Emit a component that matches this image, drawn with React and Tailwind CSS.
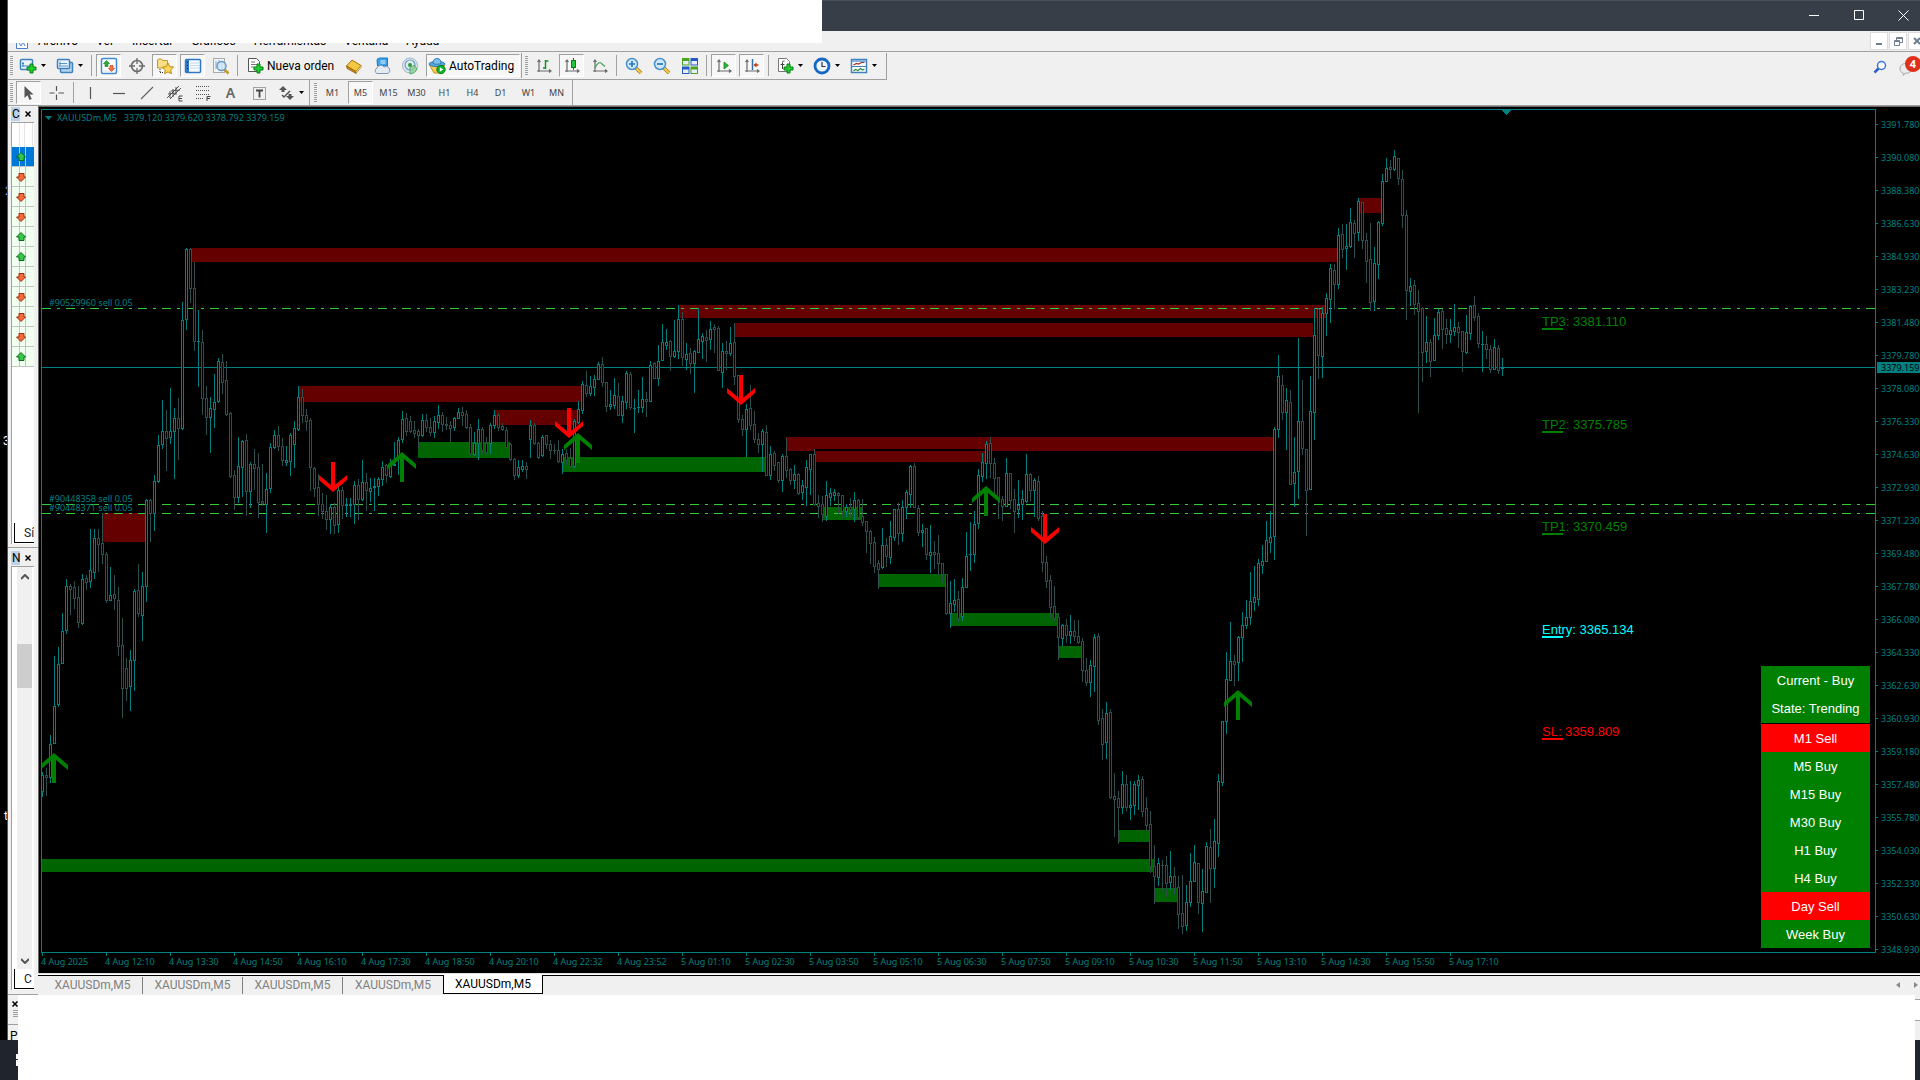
const CANDLES = `
u772 775 791 796;d768 775 777 795;u735 744 777 782;u656 706 743 743;u647 664 704 706;u613 631 663 663;u579 586 630 633;d584 586 589 614;
d581 587 598 608;d586 597 622 627;u574 579 623 624;d575 578 582 589;u529 570 581 587;u529 538 572 578;d529 538 544 571;d513 543 554 563;
d552 554 600 602;u567 595 600 600;d575 594 598 609;d587 600 646 655;d618 645 688 717;d658 668 688 700;u650 660 686 710;u589 591 660 690;
d564 590 613 616;u572 586 615 640;u499 500 586 601;d499 500 513 541;u475 481 513 530;u435 445 481 482;u400 431 444 448;d410 431 438 470;
u388 431 437 443;u408 418 431 478;d398 418 428 459;u302 320 428 429;u248 249 319 329;d248 249 288 302;d262 288 341 350;u310 341 341 386;
d330 342 398 414;d386 398 417 434;u397 408 417 452;u374 402 409 427;u358 361 401 402;d354 362 382 393;d361 380 414 415;d412 413 476 477;
d470 475 497 509;u437 466 497 502;u440 441 467 496;d434 440 491 515;u462 464 491 507;d449 464 468 489;d453 467 502 517;d464 501 503 505;
u473 489 504 532;u443 447 488 492;u430 435 447 448;d426 435 446 450;d438 446 460 465;u446 460 462 465;u433 435 461 475;u421 428 444 467;
u386 397 429 430;d389 397 415 422;d409 415 421 430;d418 420 467 490;d467 468 488 496;d474 487 504 515;d493 504 511 518;d495 511 519 529;
u504 507 519 533;d503 507 525 533;u487 490 524 532;d487 490 505 518;u498 504 505 516;u498 504 505 516;u481 485 504 523;d479 485 499 519;
u460 482 499 500;d473 482 490 510;u478 488 491 501;u478 486 487 510;u477 479 486 495;u461 467 479 485;d464 465 475 482;u459 465 476 477;
u442 464 465 465;u437 440 458 474;u411 419 439 442;d413 418 431 435;d416 421 431 432;d421 430 433 437;d429 431 435 448;u414 420 435 436;
d414 420 427 431;d418 427 432 435;u416 421 432 437;u405 415 422 428;d412 415 424 431;d417 424 425 429;d421 425 428 441;u417 418 427 430;
u408 412 418 418;d407 412 415 425;d410 414 427 428;d424 427 453 454;u432 443 454 455;u419 429 443 459;d427 429 450 453;d437 443 452 453;
u423 425 443 453;u410 415 425 428;d413 415 427 430;d423 426 429 430;d427 430 447 447;d443 444 459 460;d458 459 475 479;u460 467 475 477;
u460 466 469 471;d462 466 469 478;u420 425 439 457;d423 425 443 444;d442 443 457 458;u435 437 455 456;d435 435 444 448;d440 444 450 458;
d444 450 450 453;d440 450 461 462;u449 454 462 473;d449 453 460 464;d448 458 466 466;u419 421 466 467;u401 409 422 423;u381 384 410 413;
d371 385 393 396;u376 386 393 395;u375 379 387 395;u362 364 379 379;d357 364 382 386;d382 382 406 411;u390 404 406 409;u378 395 405 408;
d383 396 415 415;u396 401 415 422;u371 373 402 408;d372 374 407 409;u399 408 408 432;u390 407 407 412;u377 399 407 412;d392 399 401 416;
u361 365 401 401;d362 363 378 378;u345 361 378 385;u324 342 360 360;u329 342 345 349;d340 341 356 370;u320 351 356 357;u305 319 351 358;
d312 319 357 365;u343 354 359 369;d348 353 363 373;u350 351 363 392;u308 339 352 352;u333 336 341 358;d330 337 340 361;u321 329 339 349;
d324 327 329 352;d326 328 370 370;u343 351 372 387;d341 351 353 369;u327 343 353 355;d323 342 376 384;d375 375 419 422;d415 419 429 435;
u404 409 429 456;d385 408 425 429;d411 424 439 442;d433 439 444 452;u429 431 444 471;d425 432 475 475;u446 454 475 479;d451 453 465 470;
d462 462 480 482;u454 456 480 491;d438 456 470 477;d468 469 480 484;u465 474 480 488;d473 474 493 494;u480 485 492 499;u460 467 487 505;
u454 454 469 494;d449 454 504 505;d495 503 506 517;d496 504 514 521;u481 495 516 520;u488 493 497 505;u489 492 495 500;d492 493 495 513;
d495 495 511 517;u504 507 511 516;d498 507 509 517;u492 500 509 521;d499 500 517 519;d499 516 522 525;d521 521 531 552;d530 531 543 563;
d537 542 566 572;d560 563 569 588;u528 545 567 568;d538 545 556 566;u521 536 557 563;u509 509 537 540;d503 509 533 544;u500 507 533 541;
u490 492 507 518;u465 466 494 507;d463 466 507 507;d505 508 532 535;u524 530 532 546;d528 528 554 559;u525 552 555 572;d541 552 554 568;
d535 553 563 574;d563 563 574 582;d574 574 613 614;u581 603 613 627;u579 600 604 611;d591 599 618 621;u578 587 616 620;u532 556 587 587;
u522 554 554 570;u511 524 554 562;u469 475 523 528;u453 462 476 481;u441 444 463 478;d437 443 463 477;d458 463 478 495;d477 477 497 518;
d496 499 506 520;u458 473 506 506;d473 473 500 508;d489 499 511 532;u480 505 509 517;u490 499 504 519;u454 474 501 502;d473 474 490 500;
u478 480 490 516;d476 481 518 520;d511 516 562 571;d556 562 581 587;d575 580 607 617;d586 606 618 620;d613 617 637 659;u624 625 638 645;
d619 625 635 642;u615 631 635 643;d620 631 636 640;d620 636 642 643;d638 641 670 681;d658 670 682 685;u660 665 682 696;u634 637 666 691;
d633 636 720 724;d709 718 744 759;u702 713 742 758;d709 712 797 798;d773 796 799 836;d791 798 807 843;u771 784 807 813;d775 784 807 810;
u781 805 807 819;u781 784 805 814;u775 780 785 809;d776 779 811 816;d797 808 825 830;d811 824 866 872;d845 866 876 903;u858 863 877 885;
d860 865 865 891;d856 865 883 896;u851 876 882 889;d867 876 888 894;d876 887 914 928;d875 913 926 933;u885 902 925 930;u853 881 902 906;
u845 862 881 881;d863 863 902 913;u869 891 903 931;u842 846 892 892;d829 847 868 902;u819 841 868 887;u774 781 843 856;u721 721 782 785;
u652 679 721 733;u622 661 680 680;d655 661 664 685;u636 637 662 680;u612 625 637 661;u600 617 625 628;u572 601 617 624;u566 597 602 610;
u559 563 599 605;u545 561 565 573;u521 540 561 561;u511 537 542 552;u427 429 536 559;u355 376 429 437;d375 385 412 419;u388 400 412 449;
d390 402 484 484;u437 472 483 506;u338 421 471 498;d380 421 448 454;d449 449 490 535;u376 411 489 489;u308 335 412 439;d308 309 355 378;
u307 313 356 377;u293 298 313 335;u264 268 299 322;d264 270 284 308;u228 235 284 288;d224 234 249 257;u224 246 248 269;u208 222 246 247;
d220 223 233 257;u198 201 232 240;d202 202 240 248;d233 240 261 282;d223 259 302 310;u247 263 301 310;u221 222 264 278;u174 181 223 225;
u158 168 181 181;d160 167 169 178;u150 156 169 170;d158 158 178 184;d170 179 215 227;d210 215 290 319;u278 286 291 305;d280 285 304 314;
d290 303 311 412;d307 308 352 381;u316 342 351 362;d339 342 361 376;u318 335 360 360;u309 312 335 339;d309 311 329 348;d319 328 334 343;
u319 330 334 342;u304 327 331 335;d322 327 332 347;d331 331 351 371;u315 332 352 353;u305 306 333 339;d296 305 317 320;d313 316 343 347;
u331 344 344 371;d336 344 349 358;d345 349 369 372;u339 347 369 369;d345 348 370 373;u358 368 368 375`
  .trim()
  .split(";")
  .map((s) => {
    const t = s.trim();
    const [high, top, bottom, low] = t.slice(1).split(" ").map(Number);
    return { up: t[0] === "u", high, top, bottom, low };
  });

// x1, y1, x2, y2
const SUPPLY = [
  [190, 248, 1337, 262],
  [298, 386, 581, 402],
  [494, 410, 578, 425],
  [102, 513, 146, 542],
  [678, 305, 1326, 318],
  [734, 323, 1313, 337],
  [786, 437, 1274, 451],
  [814, 451, 986, 462],
  [1358, 198, 1381, 213],
];

const DEMAND = [
  [418, 442, 510, 458],
  [562, 457, 766, 472],
  [822, 507, 862, 520],
  [878, 574, 946, 587],
  [950, 613, 1058, 626],
  [1058, 646, 1082, 658],
  [1118, 830, 1150, 842],
  [41, 859, 1154, 872],
  [1154, 888, 1178, 902],
];

const BUY_ARROWS = [[54, 753], [402, 452], [578, 433], [986, 486], [1238, 690]];
const SELL_ARROWS = [[333, 492], [569, 438], [741, 405], [1045, 544]];

const PRICES = [
  "3391.780", "3390.080", "3388.380", "3386.630", "3384.930", "3383.230", "3381.480",
  "3379.780", "3378.080", "3376.330", "3374.630", "3372.930", "3371.230", "3369.480",
  "3367.780", "3366.080", "3364.330", "3362.630", "3360.930", "3359.180", "3357.480",
  "3355.780", "3354.030", "3352.330", "3350.630", "3348.930",
];

const TIMES = [
  "4 Aug 2025", "4 Aug 12:10", "4 Aug 13:30", "4 Aug 14:50", "4 Aug 16:10", "4 Aug 17:30",
  "4 Aug 18:50", "4 Aug 20:10", "4 Aug 22:32", "4 Aug 23:52", "5 Aug 01:10", "5 Aug 02:30",
  "5 Aug 03:50", "5 Aug 05:10", "5 Aug 06:30", "5 Aug 07:50", "5 Aug 09:10", "5 Aug 10:30",
  "5 Aug 11:50", "5 Aug 13:10", "5 Aug 14:30", "5 Aug 15:50", "5 Aug 17:10",
];

const SIGNALS = [
  ["M1 Sell", false],
  ["M5 Buy", true],
  ["M15 Buy", true],
  ["M30 Buy", true],
  ["H1 Buy", true],
  ["H4 Buy", true],
  ["Day Sell", false],
  ["Week Buy", true],
];

const WATCH = ["up", "down", "down", "down", "up", "up", "down", "down", "down", "down", "up"];

function Icon({ children, size = 18 }) {
  return (
    <svg width={size} height={size} viewBox="0 0 18 18" fill="none" className="shrink-0">
      {children}
    </svg>
  );
}

const Plus = () => (
  <path d="M11 7h3v3h3v3h-3v3h-3v-3H8v-3h3z" fill="#1fd02f" stroke="#0a7d14" />
);

const Axes = () => (
  <path d="M4 3v12M2 14h14M2.500 5L4 3l1.500 2M14 12.500l2 1.500-2 1.500" stroke="#6b6b6b" strokeWidth="1.200" />
);

const Lens = () => (
  <>
    <path d="M11 11l5 5" stroke="#a87a10" strokeWidth="3.500" />
    <path d="M11 11l5 5" stroke="#f2cf55" strokeWidth="2" />
    <circle cx="7" cy="7" r="5.500" fill="#cfe8fb" stroke="#4a90c8" strokeWidth="1.500" />
  </>
);

const icons = {
  newChart: (
    <Icon>
      <rect x="1.500" y="2.500" width="12" height="10" rx="1" fill="#e9f3fc" stroke="#3f80bd" strokeWidth="1.500" />
      <path d="M4 5v5M3 6.500h2M3 9h9" stroke="#3f80bd" />
      <Plus />
    </Icon>
  ),
  profiles: (
    <Icon>
      <rect x="4.500" y="5.500" width="12" height="10" rx="1" fill="#b5d3ef" stroke="#3f80bd" strokeWidth="1.500" />
      <rect x="1.500" y="2.500" width="12" height="9" rx="1" fill="#e9f3fc" stroke="#3f80bd" strokeWidth="1.500" />
      <path d="M4 4.500v5M3 6.500h8M3 9h9" stroke="#5c93c6" />
    </Icon>
  ),
  watch: (
    <Icon>
      <rect x="1.500" y="1.500" width="15" height="15" rx="1.500" fill="#fff" stroke="#3f8ad0" strokeWidth="1.500" />
      <path d="M3 14h12" stroke="#ddd" />
      <path d="M6.500 3.500l3 3H8v3H5v-3H3.500z" fill="#25b336" stroke="#0d7a1b" strokeWidth=".6" />
      <path d="M11.500 14.500l-3-3H10v-3h3v3h1.500z" fill="#ff7043" stroke="#b3380f" strokeWidth=".6" />
    </Icon>
  ),
  target: (
    <Icon>
      <circle cx="9" cy="9" r="5.500" stroke="#6b6b6b" strokeWidth="1.600" />
      <path d="M9 1v6M9 11v6M1 9h6M11 9h6" stroke="#6b6b6b" strokeWidth="1.300" />
    </Icon>
  ),
  favorites: (
    <Icon>
      <path d="M1.500 3V11h10V3.500h-5L5.500 2h-3z" fill="#f8df85" stroke="#c19a2c" />
      <path d="M4 12v4M4 15.500h3" stroke="#333" strokeDasharray="1 1" />
      <path d="M12 6l1.700 3.600 3.800.5-2.800 2.700.7 3.900L12 14.800l-3.400 1.900.7-3.900L6.500 10.100l3.800-.5z" fill="#ffd75a" stroke="#b98a14" />
    </Icon>
  ),
  terminal: (
    <Icon>
      <rect x="1.500" y="2.500" width="15" height="13" rx="1" fill="#f7fbff" stroke="#2f79c2" strokeWidth="1.500" />
      <path d="M2 3h3v12H2z" fill="#2f79c2" />
      <path d="M6 6h9M6 8.500h9M6 11h9" stroke="#c7d8ea" />
      <path d="M3.500 5v1M3.500 8v1M3.500 11v1" stroke="#111" />
    </Icon>
  ),
  tester: (
    <Icon>
      <rect x="1.500" y="1.500" width="11" height="14" fill="#f3f3f3" stroke="#aaa" />
      <path d="M4 4v8M7 3v8M10 5v8" stroke="#7fa8d0" />
      <path d="M12.500 12.500l4 4" stroke="#c99a20" strokeWidth="2.500" />
      <circle cx="9.500" cy="9" r="4.500" fill="#cfe6fa" fillOpacity=".8" stroke="#5a94c8" strokeWidth="1.300" />
    </Icon>
  ),
  order: (
    <Icon>
      <path d="M2.500 1.500h8l3 3v10h-11z" fill="#fff" stroke="#555" />
      <path d="M5 5h4M5 7.500h6M5 10h3" stroke="#777" />
      <Plus />
    </Icon>
  ),
  book: (
    <Icon>
      <path d="M1.500 9L7 3l9 5.500-5 6z" fill="#f5c842" stroke="#a87512" />
      <path d="M1.500 9l9.500 5.500v2L2 11.500z" fill="#c98a17" stroke="#8f5f0b" strokeWidth=".7" />
      <path d="M16 8.500v2L11 16.500v-2z" fill="#fff3c4" stroke="#a87512" strokeWidth=".7" />
    </Icon>
  ),
  server: (
    <Icon>
      <path d="M4 2.500L6.500 1h8v8h-10z" fill="#39a0ea" stroke="#1b78bf" />
      <path d="M7.500 4h5M7.500 6h5" stroke="#e8f6ff" strokeWidth="1.200" />
      <path d="M4 16.500a3 3 0 010-5.500 4 4 0 017-1 3.400 3.400 0 014 6.500z" fill="#e3ebf5" stroke="#8796b0" />
    </Icon>
  ),
  signal: (
    <Icon>
      <circle cx="9" cy="8.500" r="7.500" fill="#dde9ef" stroke="#9db4c2" />
      <circle cx="9" cy="8" r="5" stroke="#6f9fc0" strokeWidth="1.200" />
      <circle cx="9" cy="8" r="2" fill="#2f9c3e" />
      <path d="M9 10v7a8 8 0 007-5l-3-4a5 5 0 01-4 2z" fill="#8fd09a" fillOpacity=".8" stroke="#48a156" strokeWidth=".8" />
    </Icon>
  ),
  auto: (
    <Icon>
      <path d="M1.500 8h15L13 16H6z" fill="#f6cf50" stroke="#c4951b" />
      <ellipse cx="9" cy="7" rx="8" ry="2.600" fill="#5aa9df" stroke="#2d7cb5" />
      <path d="M5 6.500C5 3 6.500 1.500 9 1.500S13 3 13 6.500c-2 1-6 1-8 0z" fill="#7fc1ec" stroke="#2d7cb5" />
      <circle cx="13" cy="12.500" r="4.200" fill="#12b22a" stroke="#0b7d1b" />
      <path d="M11.800 10.300v4.400l3.400-2.200z" fill="#fff" />
    </Icon>
  ),
  bars: (
    <Icon>
      <Axes />
      <path d="M10.500 3v9M10.500 4h3M8 11h2.500" stroke="#1a8f2b" strokeWidth="1.500" />
    </Icon>
  ),
  candles: (
    <Icon>
      <Axes />
      <path d="M10.500 1v12" stroke="#0d7a1b" />
      <rect x="8.500" y="3.500" width="4" height="7" fill="#25c43a" stroke="#0d7a1b" />
    </Icon>
  ),
  line: (
    <Icon>
      <Axes />
      <path d="M4 11c2-5 5-7 7-4l3 2.500" stroke="#4ba35a" strokeWidth="1.300" />
    </Icon>
  ),
  zoomIn: (
    <Icon>
      <Lens />
      <path d="M7 4v6M4 7h6" stroke="#2a78b8" strokeWidth="1.700" />
    </Icon>
  ),
  zoomOut: (
    <Icon>
      <Lens />
      <path d="M4 7h6" stroke="#2a78b8" strokeWidth="1.700" />
    </Icon>
  ),
  tile: (
    <Icon>
      <rect x="1" y="1" width="7.500" height="7.500" fill="#4ba321" />
      <rect x="9.500" y="1" width="7.500" height="7.500" fill="#2458c7" />
      <rect x="1" y="9.500" width="7.500" height="7.500" fill="#2458c7" />
      <rect x="9.500" y="9.500" width="7.500" height="7.500" fill="#4ba321" />
      <path d="M2 4h5.500v3.500H2zM10.500 4H16v3.500h-5.500zM2 12.500h5.500V16H2zM10.500 12.500H16V16h-5.500z" fill="#e8f0fb" />
    </Icon>
  ),
  autoScroll: (
    <Icon>
      <Axes />
      <path d="M9 5v7l4.500-3.500z" fill="#2bb53c" stroke="#0d7a1b" strokeWidth=".7" />
    </Icon>
  ),
  shift: (
    <Icon>
      <Axes />
      <path d="M9.500 2v11" stroke="#2f6fa8" strokeWidth="1.500" />
      <path d="M15.500 8h-4" stroke="#c23a10" strokeWidth="1.500" />
      <path d="M13.500 5.500v5L10.500 8z" fill="#c23a10" />
    </Icon>
  ),
  indicators: (
    <Icon>
      <path d="M2.500 1.500h8l3 3v10h-11z" fill="#fff" stroke="#777" />
      <path d="M8.500 4C6.500 3.500 6.500 5 6.500 7v5M4.500 7.500h4" stroke="#444" />
      <Plus />
    </Icon>
  ),
  clock: (
    <Icon>
      <circle cx="9" cy="9" r="7" fill="#eef5fc" stroke="#1668c4" strokeWidth="2.800" />
      <path d="M9 5v4.500h3.500" stroke="#333" strokeWidth="1.200" />
    </Icon>
  ),
  template: (
    <Icon>
      <rect x="1.500" y="2.500" width="15" height="13" fill="#fff" stroke="#3f80bd" strokeWidth="1.500" />
      <path d="M2 3h14v2H2z" fill="#7fb2e0" />
      <path d="M2 9.500h14" stroke="#3f80bd" />
      <path d="M3.500 8l3-1.500 2 .5 3-1.500h3" stroke="#a03018" strokeWidth="1.200" />
      <path d="M3.500 14l2-1.500 2.500 1 2.500-2 2 1.500 2-1" stroke="#2a8f3c" strokeWidth="1.200" />
    </Icon>
  ),
  cursor: (
    <Icon>
      <path d="M4.500 2v12l3-2.700 2 4.700 2.200-1-2-4.500H13.500z" fill="#555" />
    </Icon>
  ),
  cross: (
    <Icon>
      <path d="M8.500 2v5M8.500 10.500V16M1.500 9h5M10.500 9h5.500" stroke="#555" strokeWidth="1.200" />
    </Icon>
  ),
  vline: (
    <Icon>
      <path d="M8.500 3v12" stroke="#555" strokeWidth="1.200" />
    </Icon>
  ),
  hline: (
    <Icon>
      <path d="M3 9.500h12" stroke="#555" strokeWidth="1.200" />
    </Icon>
  ),
  trend: (
    <Icon>
      <path d="M3 15L15 3" stroke="#666" strokeWidth="1.200" />
    </Icon>
  ),
  channel: (
    <Icon>
      <path d="M1 14L13 2M4 15L15 4M4 7v7M7 5v8M10 3v8M2 10l8-1M5 7l9-1" stroke="#555" />
      <path d="M16.500 12H13v5h3.500M13 14.500h3" stroke="#444" />
    </Icon>
  ),
  fibo: (
    <Icon>
      <path d="M2 2.500h14M2 6.500h14M2 10.500h14M2 14.500h8" stroke="#555" strokeDasharray="1 1" />
      <path d="M16.500 12.500H13V17M13 14.500h3" stroke="#444" />
    </Icon>
  ),
  label: (
    <Icon>
      <rect x="3.500" y="3.500" width="12" height="12" stroke="#555" strokeDasharray="1 1" />
      <path d="M6 6.500h7M9.500 6.500v7" stroke="#444" strokeWidth="1.800" />
    </Icon>
  ),
  arrows: (
    <Icon>
      <path d="M6 2l4 4H7.500v2h-3V6H2zM13 16l-4-4h2.500v-2h3v2H17z" fill="#555" />
      <path d="M5 11l2 2 6-6" stroke="#555" strokeWidth="1.500" />
    </Icon>
  ),
};

function Grip() {
  return (
    <div className="ml-0.5 mr-px flex h-[19px] w-[3px] flex-col justify-between">
      {Array.from({ length: 10 }, (_, i) => (
        <span key={i} className="h-px bg-[#a0a0a0]" />
      ))}
    </div>
  );
}

function Sep() {
  return (
    <div className="flex w-[6px] justify-center">
      <span className="h-[21px] w-px bg-[#a0a0a0]" />
    </div>
  );
}

function Tool({ label, pressed, children }) {
  return (
    <button
      aria-label={label}
      className={
        "ml-0.5 mr-px flex h-[23px] w-[25px] items-center justify-center border text-[9px] text-[#444] " +
        (pressed ? "border-r-white border-b-white border-t-[#a0a0a0] border-l-[#a0a0a0] bg-[#f7f7f7]" : "border-transparent")
      }
    >
      {children}
    </button>
  );
}

function DropTool({ label, children }) {
  return (
    <button aria-label={label} className="flex h-[23px] w-[37px] items-center gap-1 pl-[5px]">
      {children}
      <svg width="5" height="3" viewBox="0 0 5 3">
        <path d="M0 0h5L2.500 3z" />
      </svg>
    </button>
  );
}

function TitleBar() {
  return (
    <header className="flex h-[31px] items-stretch justify-end border-t border-[#48505a] bg-[#383e48] pb-0.5">
      <button aria-label="Minimizar" className="flex w-[45px] items-center justify-center">
        <svg width="10" height="10" stroke="#fff"><path d="M0 5.500h10" /></svg>
      </button>
      <button aria-label="Maximizar" className="flex w-[45px] items-center justify-center">
        <svg width="10" height="10" stroke="#fff" fill="none"><path d="M.5.500h9v9h-9z" /></svg>
      </button>
      <button aria-label="Cerrar" className="-mr-[6px] flex w-[45px] items-center justify-center">
        <svg width="11" height="11" stroke="#fff"><path d="M.5.500l10 10M10.500.5l-10 10" /></svg>
      </button>
    </header>
  );
}

function MenuBar() {
  const box = "flex h-[18px] w-[18px] shrink-0 items-center justify-center border border-[#dcdcdc] bg-white";
  return (
    <div className="flex h-5 items-center overflow-hidden">
      <nav className="flex flex-1 items-center gap-[18px] pl-2 text-[12px] leading-[20px] text-black">
        <svg width="12" height="14" viewBox="0 0 12 14" fill="none" className="-mr-2 mt-0.5">
          <path d="M.5.500h11v13H.5z" fill="#fff" stroke="#4a7fd0" />
          <path d="M3 8l2 3 2-4 2 4" stroke="#4a7fd0" />
        </svg>
        {["Archivo", "Ver", "Insertar", "Gráficos", "Herramientas", "Ventana", "Ayuda"].map((m) => (
          <button key={m}>{m}</button>
        ))}
      </nav>
      <div className="-mr-[6px] flex gap-px">
        <button aria-label="Minimizar ventana" className={box}>
          <svg width="6" height="8"><path d="M0 7h6" stroke="#6f7f8f" strokeWidth="2" /></svg>
        </button>
        <button aria-label="Restaurar ventana" className={box}>
          <svg width="9" height="9" fill="none" stroke="#6f7f8f"><path d="M2.500 3V.5h6v5H6M.5 3.500h5v5h-5zM.5 4.500h5M3 1.500h5" /></svg>
        </button>
        <button aria-label="Cerrar ventana" className={box}>
          <svg width="8" height="8" stroke="#6f7f8f" strokeWidth="2"><path d="M1 1l6 6M7 1L1 7" /></svg>
        </button>
      </div>
    </div>
  );
}

function Toolbars() {
  return (
    <div className="flex items-start border-t border-[#a0a0a0] pt-px">
      <div className="flex flex-1 flex-col items-start">
        <div className="flex h-[27px] items-center border-r border-b border-[#a0a0a0] pr-1 pb-px">
          <Grip />
          <DropTool label="Nuevo gráfico">{icons.newChart}</DropTool>
          <DropTool label="Perfiles">{icons.profiles}</DropTool>
          <Sep />
          <Tool label="Observación de mercado" pressed>{icons.watch}</Tool>
          <Tool label="Ventana de datos">{icons.target}</Tool>
          <Tool label="Navegador" pressed>{icons.favorites}</Tool>
          <Tool label="Terminal" pressed>{icons.terminal}</Tool>
          <Tool label="Probador">{icons.tester}</Tool>
          <Sep />
          <button className="flex h-[23px] w-[99px] items-center gap-[3px] pl-[6px] text-[12px] text-black">
            {icons.order}Nueva orden
          </button>
          <Tool label="MetaEditor">{icons.book}</Tool>
          <Tool label="VPS">{icons.server}</Tool>
          <Tool label="Señales">{icons.signal}</Tool>
          <button className="ml-[3px] mr-px flex h-[23px] w-[94px] items-center gap-[3px] border border-t-[#a0a0a0] border-l-[#a0a0a0] border-r-white border-b-white bg-[#f7f7f7] pl-px text-[12px] text-black">
            {icons.auto}AutoTrading
          </button>
          <span className="mr-px h-[25px] w-px bg-[#a0a0a0]" />
          <Grip />
          <Tool label="Barras">{icons.bars}</Tool>
          <Tool label="Velas" pressed>{icons.candles}</Tool>
          <Tool label="Línea">{icons.line}</Tool>
          <Sep />
          <Tool label="Acercar">{icons.zoomIn}</Tool>
          <Tool label="Alejar">{icons.zoomOut}</Tool>
          <Tool label="Mosaico">{icons.tile}</Tool>
          <Sep />
          <Tool label="Desplazamiento automático" pressed>{icons.autoScroll}</Tool>
          <Tool label="Desplazar gráfico" pressed>{icons.shift}</Tool>
          <Sep />
          <DropTool label="Indicadores">{icons.indicators}</DropTool>
          <DropTool label="Períodos">{icons.clock}</DropTool>
          <DropTool label="Plantillas">{icons.template}</DropTool>
        </div>
        <div className="flex h-[25px] items-center border-r border-[#a0a0a0] pr-0.5 font-['Noto_Sans',sans-serif]">
          <Grip />
          <Tool label="Cursor" pressed>{icons.cursor}</Tool>
          <Tool label="Cruz">{icons.cross}</Tool>
          <Sep />
          <Tool label="Línea vertical">{icons.vline}</Tool>
          <Tool label="Línea horizontal">{icons.hline}</Tool>
          <Tool label="Línea de tendencia">{icons.trend}</Tool>
          <Tool label="Canal">{icons.channel}</Tool>
          <Tool label="Fibonacci">{icons.fibo}</Tool>
          <Tool label="Texto"><span className="text-[14px] font-semibold text-[#666]">A</span></Tool>
          <Tool label="Etiqueta">{icons.label}</Tool>
          <DropTool label="Flechas">{icons.arrows}</DropTool>
          <span className="mr-0.5 h-[25px] w-px bg-[#a0a0a0]" />
          <Grip />
          {["M1", "M5", "M15", "M30", "H1", "H4", "D1", "W1", "MN"].map((tf) => (
            <Tool key={tf} label={tf} pressed={tf === "M5"}>{tf}</Tool>
          ))}
        </div>
      </div>
      <div className="flex items-center gap-3 pt-1">
        <button aria-label="Buscar">
          <svg width="14" height="14" viewBox="0 0 14 14" fill="none">
            <path d="M1.500 12.500L6 8" stroke="#2a5fc8" strokeWidth="2.500" />
            <circle cx="8.500" cy="5.500" r="4" fill="#fff" stroke="#3d74dc" strokeWidth="1.500" />
          </svg>
        </button>
        <button aria-label="Notificaciones" className="relative h-5 w-[21px]">
          <svg width="16" height="16" viewBox="0 0 16 16" className="absolute bottom-0 left-0">
            <path d="M1 8a6 5 0 1111 2c-1 2-4 2.500-6 2l-1.500 2.500L4 12C2 11 1 10 1 8z" fill="#ececec" stroke="#aaa" />
          </svg>
          <span className="absolute -top-px -right-px flex h-4 w-4 items-center justify-center rounded-full bg-[#e0301c] font-['Open_Sans',sans-serif] text-[11px] font-bold text-white">4</span>
        </button>
      </div>
    </div>
  );
}

function DockHeader({ letter }) {
  return (
    <div className="flex h-4 items-center pl-[3px] text-[12px] leading-[14px]">
      <span className="w-[9px] overflow-hidden bg-[#bcd2e8] pl-px text-black">{letter}</span>
      <button aria-label="Cerrar panel" className="ml-[5px]">
        <svg width="6" height="6" stroke="#000" strokeWidth="1.500"><path d="M.5.500l5 5M5.500.5l-5 5" /></svg>
      </button>
    </div>
  );
}

function DockTab({ text }) {
  return (
    <div className="mr-1 ml-[3px] border-l border-[#a0a0a0] bg-white pb-px">
      <div className="ml-0.5 h-5 overflow-hidden border-b border-l border-black pl-[9px] text-[12px] leading-[20px] text-[#222]">
        {text}
      </div>
    </div>
  );
}

function Dock() {
  return (
    <aside className="flex w-[30px] shrink-0 flex-col bg-[#f0f0f0]">
      <DockHeader letter="C" />
      <div className="mr-1 ml-[3px] flex flex-1 flex-col border-t border-l border-[#a0a0a0] bg-white">
        <div className="flex h-6">
          <span className="w-2 border-r border-[#e5e5e5]" />
          <span className="w-[5px] border-r border-[#e5e5e5]" />
          <span className="w-[8px] border-r border-[#e5e5e5]" />
        </div>
        {WATCH.map((dir, i) => (
          <div
            key={i}
            className={"relative flex h-5 border-b border-[#c4c4c4] " + (i === 0 ? "bg-[#0078d7]" : "bg-[#f0fff0]")}
          >
            <span className="w-2 border-r border-[#c4c4c4]" />
            <span className="w-[6px] border-r border-[#c4c4c4]" />
            <svg width="10" height="10" viewBox="0 0 10 10" className="absolute top-[5px] left-[4px]">
              {dir === "up" ? (
                <path d="M5 .5L9.500 5H8v3.500H3V5H.5z" fill="#35c94a" stroke="#0b6d18" />
              ) : (
                <path d="M5 9.500L.5 5H3V1.500h5V5h1.500z" fill="#f5693a" stroke="#9c2f0a" />
              )}
            </svg>
          </div>
        ))}
      </div>
      <DockTab text="Sí" />
      <div className="h-[4px] border-b border-[#a0a0a0]" />
      <div className="h-0.5" />
      <DockHeader letter="N" />
      <div className="mr-1 ml-[3px] flex h-[403px] border-t border-l border-[#a0a0a0] bg-white pl-[5px]">
        <div className="flex w-[15px] flex-col items-center bg-[#f0f0f0]">
          <svg width="8" height="6" fill="none" stroke="#555" strokeWidth="2" className="mt-[7px]"><path d="M0 5l4-4 4 4" /></svg>
          <div className="mt-[64px] h-11 w-full bg-[#cdcdcd]" />
          <svg width="8" height="6" fill="none" stroke="#555" strokeWidth="2" className="mt-auto mb-[5px]"><path d="M0 1l4 4 4-4" /></svg>
        </div>
      </div>
      <DockTab text="C" />
      <div className="h-[5px] border-b border-[#a0a0a0]" />
    </aside>
  );
}

function Zone({ r, fill }) {
  return <rect x={r[0]} y={r[1]} width={r[2] - r[0]} height={r[3] - r[1]} fill={fill} />;
}

function Plot() {
  const arrow = "M0 0L14 12v5L2 7v23h-4V7l-12 10v-5z";
  return (
    <svg
      className="block h-full w-full"
      viewBox="42 110 1833 842"
      preserveAspectRatio="none"
      fill="none"
    >
      <g shapeRendering="crispEdges">
        {DEMAND.map((r, i) => <Zone key={i} r={r} fill="#006400" />)}
        {SUPPLY.map((r, i) => <Zone key={i} r={r} fill="#640000" />)}
        <rect x="814" y="449" width="172" height="2" fill="#000" />
        {[308, 504, 513].map((y) => (
          <path key={y} d={`M42 ${y + 0.5}H1875`} stroke="#32cd32" strokeDasharray="9 6 3 6" />
        ))}
        <path d="M42 367.500H1875" stroke="#008080" />
        {CANDLES.map((c, i) => {
          const x = 42.5 + i * 4;
          return (
            <g key={i} stroke={c.up ? "#008080" : "#2f4f4f"}>
              <path d={`M${x} ${c.high}V${c.low + 1}`} />
              {c.bottom > c.top ? (
                <rect x={x - 1} y={c.top + 0.5} width="2" height={c.bottom - c.top} fill="#000" />
              ) : (
                <path d={`M${x - 1.5} ${c.top + 0.5}h3`} />
              )}
            </g>
          );
        })}
        <path d="M1502 110h9l-4.500 5z" fill="#008080" />
      </g>
      {BUY_ARROWS.map(([x, y]) => (
        <path key={x} d={arrow} fill="#008000" transform={`translate(${x} ${y})`} />
      ))}
      {SELL_ARROWS.map(([x, y]) => (
        <path key={x} d={arrow} fill="#f00" transform={`translate(${x} ${y}) scale(1 -1)`} />
      ))}
    </svg>
  );
}

function Level({ className, bar, children }) {
  return (
    <div className={"absolute left-[1500px] font-['Liberation_Sans',Arial,sans-serif] text-[13px] leading-[16px] " + className}>
      {children}
      <span className={"absolute bottom-0 left-0 h-0.5 w-[21px] " + bar} />
    </div>
  );
}

function SignalPanel() {
  return (
    <div className="absolute right-[5px] bottom-[4px] w-[109px] text-center font-['Liberation_Sans',Arial,sans-serif] text-[13px] leading-[28px] text-white">
      <div className="mb-px bg-[#008000] pt-px">
        <p>Current - Buy</p>
        <p>State: Trending</p>
      </div>
      <ul className="leading-[26px]">
        {SIGNALS.map(([text, buy]) => (
          <li key={text} className={"pt-0.5 " + (buy ? "bg-[#008000]" : "bg-[#ff0000]")}>{text}</li>
        ))}
      </ul>
    </div>
  );
}

function Chart() {
  return (
    <div className="flex border-t border-l border-[#696969] bg-black pl-0.5 font-['Noto_Sans',sans-serif] text-[9px] leading-[11px] text-[#008080]">
      <div className="min-w-0 flex-1 pt-0.5">
        <div className="relative h-[844px] overflow-hidden border border-[#008080]">
          <Plot />
          <div className="absolute top-[2px] left-[3px] flex items-center gap-[5px] whitespace-pre">
            <svg width="7" height="4"><path d="M0 0h7L3.500 4z" fill="#008080" /></svg>
            {"XAUUSDm,M5   3379.120 3379.620 3378.792 3379.159"}
          </div>
          <span className="absolute top-[187px] left-[7px]">#90529960 sell 0.05</span>
          <span className="absolute top-[383px] left-[7px]">#90448358 sell 0.05</span>
          <span className="absolute top-[392px] left-[7px]">#90448371 sell 0.05</span>
          <Level className="top-[204px] text-[#008000]" bar="bg-[#008000]">TP3: 3381.110</Level>
          <Level className="top-[307px] text-[#008000]" bar="bg-[#008000]">TP2: 3375.785</Level>
          <Level className="top-[409px] text-[#008000]" bar="bg-[#008000]">TP1: 3370.459</Level>
          <Level className="top-[512px] text-[#00ffff]" bar="bg-[#00ffff]">Entry: 3365.134</Level>
          <Level className="top-[614px] text-[#ff0000]" bar="bg-[#ff0000]">SL: 3359.809</Level>
          <SignalPanel />
        </div>
        <div className="flex h-5 overflow-hidden">
          {TIMES.map((t) => (
            <div key={t} className="w-16 shrink-0 whitespace-nowrap">
              <div className="ml-px h-[3px] w-px bg-[#008080]" />
              {t}
            </div>
          ))}
        </div>
      </div>
      <div className="relative w-11 shrink-0 pt-px">
        {PRICES.map((p) => (
          <div key={p} className="flex h-[33px] items-center gap-[3px]">
            <span className="h-px w-0.5 bg-[#008080]" />
            {p}
          </div>
        ))}
        <div className="absolute top-[255px] right-0 left-px bg-[#008080] pl-1 text-black">3379.159</div>
      </div>
    </div>
  );
}

function ChartTabs() {
  return (
    <div className="flex h-5 items-start border-t border-black pl-[5px] text-[12px] leading-[17px]">
      {[0, 1, 2, 3].map((i) => (
        <button key={i} className={"mt-px h-[17px] w-[100px] border-[#808080] text-[#808080] " + (i < 3 ? "border-r" : "")}>
          XAUUSDm,M5
        </button>
      ))}
      <button className="-mt-px h-[19px] w-[100px] border-r border-b border-l border-black bg-white text-black">XAUUSDm,M5</button>
      <div className="ml-auto flex gap-[14px] pt-1.5 pr-0.5">
        <button aria-label="Anterior"><svg width="4" height="6" className="block"><path d="M4 0v6L0 3z" fill="#888" /></svg></button>
        <button aria-label="Siguiente"><svg width="4" height="6" className="block"><path d="M0 0v6l4-3z" fill="#888" /></svg></button>
      </div>
    </div>
  );
}

export default function App() {
  return (
    <div className="flex min-h-screen flex-col overflow-hidden bg-black font-[Roboto,'Noto_Sans',sans-serif]">
      <div className="flex">
        <div className="relative w-2 shrink-0 overflow-hidden border-r border-[#555] text-[12px] text-white">
          <span className="absolute top-[182px] left-[5px] text-[#6aa8e8]">2</span>
          <span className="absolute top-[432px] left-[3px]">3</span>
          <span className="absolute top-[807px] left-[4px]">t</span>
        </div>
        <main className="relative min-w-0 flex-1 bg-[#f0f0f0]">
          <TitleBar />
          <MenuBar />
          <div className="absolute top-0 left-0 h-[43px] w-[814px] bg-white" />
          <Toolbars />
          <div className="flex border-t border-[#a0a0a0]">
            <Dock />
            <div className="min-w-0 flex-1">
              <Chart />
              <div className="h-0.5 border-t border-[#e3e3e3] bg-white" />
              <ChartTabs />
            </div>
          </div>
        </main>
      </div>
      <footer className="flex flex-1">
        <div className="flex w-[18px] shrink-0 flex-col overflow-hidden">
          <div className="ml-[7px] h-[45px] border-l border-[#555] bg-[#f0f0f0] pl-[4px] text-[12px]">
            <svg width="6" height="6" stroke="#000" strokeWidth="1.500" className="mt-[6px]"><path d="M.5.500l5 5M5.500.5l-5 5" /></svg>
            <svg width="5" height="8" stroke="#a0a0a0" className="mt-[3px] ml-px"><path d="M0 .5h5M0 2.500h5M0 4.500h5M0 6.500h5" /></svg>
            <div className="mt-[6px] -ml-[4px] border-t border-[#a0a0a0] pt-1 pl-0.5 leading-[14px]">P</div>
          </div>
          <div className="flex flex-1 flex-col items-end bg-[#20252d] pt-[14px]">
            <span className="h-[5px] w-0.5 bg-white" />
            <span className="mt-px h-[6px] w-0.5 bg-white" />
          </div>
        </div>
        <div className="flex-1 bg-white" />
        <div className="flex w-[5px] shrink-0 flex-col bg-white">
          <div className="h-[5px] border-b border-[#a0a0a0] bg-[#f0f0f0]" />
          <div className="mt-5 h-5 border-t border-[#a0a0a0] bg-[#f0f0f0]" />
          <div className="flex-1 bg-[#20252d]" />
        </div>
      </footer>
    </div>
  );
}
